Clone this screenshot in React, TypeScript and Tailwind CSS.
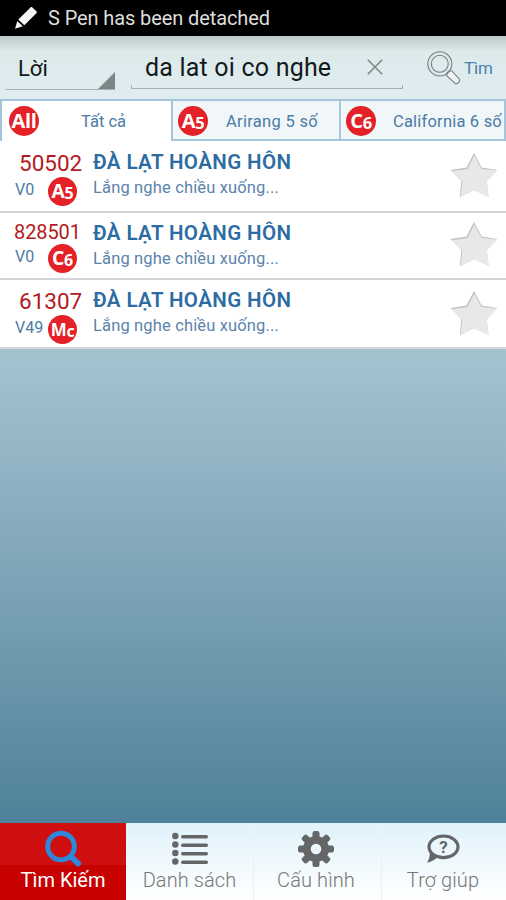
import { ReactNode } from "react";
import clsx from "clsx";

type BadgeProps = {
  label: string;
  small?: string;
  className?: string;
};

type Song = {
  id: string;
  code: string;
  codeClass: string;
  volume: string;
  badge: { label: string; small: string };
  title: string;
  lyric: string;
  rowClass: string;
  leftClass: string;
  bottomClass: string;
  textClass: string;
  starClass: string;
};

const songs: Song[] = [
  {
    id: "a5-50502",
    code: "50502",
    codeClass: "pl-[19px] text-[22.5px]",
    volume: "V0",
    badge: { label: "A", small: "5" },
    title: "ĐÀ LẠT HOÀNG HÔN",
    lyric: "Lắng nghe chiều xuống...",
    rowClass: "h-[72px]",
    leftClass: "pt-[9px]",
    bottomClass: "mt-[1px]",
    textClass: "pt-[9px]",
    starClass: "mt-[10px]",
  },
  {
    id: "c6-828501",
    code: "828501",
    codeClass: "pl-[14px] text-[20px] tracking-[-0.1px]",
    volume: "V0",
    badge: { label: "C", small: "6" },
    title: "ĐÀ LẠT HOÀNG HÔN",
    lyric: "Lắng nghe chiều xuống...",
    rowClass: "h-[67px]",
    leftClass: "pt-[6px]",
    bottomClass: "-mt-[1px]",
    textClass: "pt-[8px]",
    starClass: "mt-[7px]",
  },
  {
    id: "mc-61307",
    code: "61307",
    codeClass: "pl-[19px] text-[22.5px]",
    volume: "V49",
    badge: { label: "M", small: "c" },
    title: "ĐÀ LẠT HOÀNG HÔN",
    lyric: "Lắng nghe chiều xuống...",
    rowClass: "h-[69px]",
    leftClass: "pt-[8px]",
    bottomClass: "mt-[1px]",
    textClass: "pt-[8px]",
    starClass: "mt-[9px]",
  },
];

const Badge = ({ label, small, className }: BadgeProps) => (
  <svg viewBox="0 0 30 30" className={clsx("shrink-0", className)}>
    <circle cx="15" cy="15" r="15" fill="#e32126" />
    <text
      x="15"
      y="21.800"
      textAnchor="middle"
      fill="#fff"
      fontFamily="'Open Sans', sans-serif"
      fontWeight="700"
      fontSize={label === "M" ? 17.5 : 20}
      letterSpacing="-0.3"
    >
      {label}
      {small && (
        <tspan fontSize="16.500" dy="1">
          {small}
        </tspan>
      )}
    </text>
  </svg>
);

const Star = ({ className }: { className?: string }) => (
  <svg viewBox="0 0 48 48" className={clsx("h-12 w-12 shrink-0", className)}>
    <path d="M24 2l7.700 14.500L47 19 36.500 30l2 15.500L24 39l-14.200 7 1.500-16L.8 19l15.700-2.500z" fill="#c2c2c2" />
    <path d="M24.300 4.500l7 13.200L47.200 19.800 37 30.500l1.800 16-14.500-7.200L10.500 46.500l1.800-16L2 20.300l15.500-2.300z" fill="#e8e8e8" />
  </svg>
);

const SongRow = ({ song }: { song: Song }) => (
  <li className={clsx("flex border-b-2 border-[#d2d6d8] bg-white", song.rowClass)}>
    <div className={clsx("w-[93px] shrink-0", song.leftClass)}>
      <div className={clsx("h-[26px] leading-[26px] text-[#b3191d]", song.codeClass)}>{song.code}</div>
      <div className={clsx("flex pl-[15px]", song.bottomClass)}>
        <span className="w-[33px] pt-[3px] text-[16px] leading-[20px] text-[#4b7ba5]">{song.volume}</span>
        <Badge {...song.badge} className="h-[29px] w-[29px]" />
      </div>
    </div>
    <div className={clsx("flex-1 whitespace-nowrap", song.textClass)}>
      <div className="text-[20.5px] font-semibold leading-[24px] tracking-[0.4px] text-[#2c6ca3]">{song.title}</div>
      <div className="mt-[2px] text-[16.5px] leading-[24px] tracking-[0.15px] text-[#5b83ab]">{song.lyric}</div>
    </div>
    <Star className={clsx("mr-[8px]", song.starClass)} />
  </li>
);

type NavItemProps = {
  label: string;
  className: string;
  labelClass: string;
  children: ReactNode;
};

const NavItem = ({ label, className, labelClass, children }: NavItemProps) => (
  <button className={clsx("flex h-full flex-col items-center pt-[6px]", className)}>
    <span className="flex h-[39px] items-center">{children}</span>
    <span className={clsx("whitespace-nowrap text-[20px] leading-[24px]", labelClass)}>{label}</span>
  </button>
);

const App = () => {
  return (
    <div className="flex h-[900px] w-[506px] flex-col overflow-hidden bg-linear-to-b from-[#d7e7eb] from-5% via-[#92b4c4] via-52% to-[#4d8199] to-92% font-['Roboto',sans-serif]">
      {/* status bar */}
      <div className="flex h-[36px] shrink-0 items-center bg-black pl-[14px]">
        <svg viewBox="0 0 24 24" className="h-[24px] w-[24px]" fill="#f4f4f4">
          <path d="M16.500 1.500c.6-.6 1.300-.6 1.900 0l4 3.800c.6.600.6 1.300 0 1.900L10.300 19.200l-6-5.700z" />
          <path d="M3.300 15l5.500 5.300L1 22.700z" />
        </svg>
        <span className="ml-[10px] text-[20px] tracking-[-0.1px] text-[#dedede]">S Pen has been detached</span>
      </div>

      {/* search bar */}
      <div className="flex h-[63px] shrink-0 bg-linear-to-b from-[#bccaca] via-[#dceaec] via-25% to-[#dfedf0]">
        <div className="ml-[6px] mt-[15px] flex h-[39px] w-[109px] justify-between border-b border-[#a3b1b5] pl-[12px]">
          <span className="text-[22px] leading-[35px] text-[#141819]">Lời</span>
          <svg viewBox="0 0 17 17" className="mt-[21px] h-[17px] w-[17px]">
            <path d="M17 0v17H0z" fill="#7b8586" />
          </svg>
        </div>
        <div className="ml-[16px] mt-[11px] flex h-[42px] w-[272px] flex-col">
          <div className="flex h-[38px] pl-[14px]">
            <span className="w-[222px] whitespace-nowrap text-[25px] leading-[42px] tracking-[0.2px] text-[#15191a]">
              da lat oi co nghe
            </span>
            <svg viewBox="0 0 16 16" className="mt-[12px] h-[16px] w-[16px]" stroke="#7d8889" strokeWidth="1.600">
              <path d="M.8.800l14.400 14.400M15.200.800L.8 15.200" />
            </svg>
          </div>
          <div className="h-[4px] border-x border-b border-[#a3b1b5]" />
        </div>
        <svg
          viewBox="0 0 34 34"
          className="ml-[24px] mt-[15px] h-[34px] w-[34px]"
          fill="none"
          stroke="#747d7e"
          strokeWidth="1.100"
        >
          <circle cx="12.800" cy="12.800" r="12" />
          <circle cx="12.800" cy="12.800" r="8.500" />
          <path d="M19.500 24.500c0-2 3-5 5.200-4.800l8 8.800c.6 1.600-2.200 4.600-4.200 4.300z" fill="#edf3f4" />
          <path d="M19.500 22.500l2.600-2.600" />
        </svg>
        <span className="ml-[3px] mt-[20px] text-[17px] leading-[24px] tracking-[-0.2px] text-[#4b7eae]">Tìm</span>
      </div>

      {/* song book tabs */}
      <div className="flex h-[42px] shrink-0 border-t-2 border-[#a5c5dc] text-[16.5px] text-[#4b7ba5]">
        <div className="flex w-[171px] items-center border-l-2 border-[#a5c5dc] bg-white pl-[7px]">
          <Badge label="All" className="h-[30px] w-[30px]" />
          <span className="ml-[42px] mt-[2px]">Tất cả</span>
        </div>
        <div className="flex w-[168px] items-center border-b-2 border-l-2 border-[#a5c5dc] bg-[#f1f6f9] pl-[5px] pt-[2px]">
          <Badge label="A" small="5" className="h-[30px] w-[30px]" />
          <span className="ml-[18px] mt-[2px] whitespace-nowrap tracking-[0.3px]">Arirang 5 số</span>
        </div>
        <div className="flex w-[167px] items-center border-x-2 border-b-2 border-[#a5c5dc] bg-[#f1f6f9] pl-[5px] pt-[2px]">
          <Badge label="C" small="6" className="h-[30px] w-[30px]" />
          <span className="ml-[17px] mt-[2px] whitespace-nowrap tracking-[0.2px]">California 6 số</span>
        </div>
      </div>

      <ul className="shrink-0">
        {songs.map((song) => (
          <SongRow key={song.id} song={song} />
        ))}
      </ul>

      {/* bottom navigation */}
      <div className="mt-auto flex h-[77px] shrink-0 bg-linear-to-b from-[#e0f2fb] to-white">
        <NavItem
          label="Tìm Kiếm"
          className="w-[126px] bg-linear-to-b from-[#cf0f0f] from-54% to-[#c70000] to-54%"
          labelClass="text-white"
        >
          <svg viewBox="0 0 38 38" className="h-[38px] w-[38px]" fill="none" stroke="#2f87da" strokeLinecap="round">
            <circle cx="17" cy="16.500" r="13.300" strokeWidth="5" />
            <path d="M27 26.500l7 7" strokeWidth="6" />
          </svg>
        </NavItem>
        <NavItem label="Danh sách" className="w-[127px]" labelClass="text-[#777] font-light tracking-[0.1px]">
          <svg viewBox="0 0 36 34" className="h-[34px] w-[36px]" fill="#646668">
            {[4, 12.5, 21, 29.5].map((y) => (
              <g key={y}>
                <circle cx="3.300" cy={y} r="3.200" />
                <rect x="9" y={y - 1} width="27" height="3.500" rx="1.700" />
              </g>
            ))}
          </svg>
        </NavItem>
        <NavItem
          label="Cấu hình"
          className="w-[128px] border-l border-[#eaf2f6] pr-[3px]"
          labelClass="text-[#777] font-light tracking-[0.1px]"
        >
          <svg viewBox="-18 -18 36 36" className="h-[36px] w-[36px]" fill="#646668">
            {[0, 45, 90, 135].map((angle) => (
              <rect key={angle} x="-3.500" y="-18" width="7" height="36" rx="2.200" transform={`rotate(${angle})`} />
            ))}
            <circle r="13" />
            <circle r="5.300" fill="#eaf6fc" />
          </svg>
        </NavItem>
        <NavItem
          label="Trợ giúp"
          className="w-[125px] border-l border-[#eaf2f6] pr-[2px]"
          labelClass="text-[#777] font-light tracking-[0.1px]"
        >
          <svg viewBox="0 0 34 30" className="h-[30px] w-[34px]">
            <ellipse cx="17.500" cy="12.800" rx="14.500" ry="10.800" fill="none" stroke="#646668" strokeWidth="3.200" />
            <path d="M3.500 17.500C4.500 21 3 25.500 1 28.800c4.500-1 8-3 10.500-5.500z" fill="#646668" />
            <text x="17.500" y="18.800" textAnchor="middle" fontFamily="Roboto, sans-serif" fontWeight="700" fontSize="17" fill="#646668">
              ?
            </text>
          </svg>
        </NavItem>
      </div>
    </div>
  );
};

export default App;
